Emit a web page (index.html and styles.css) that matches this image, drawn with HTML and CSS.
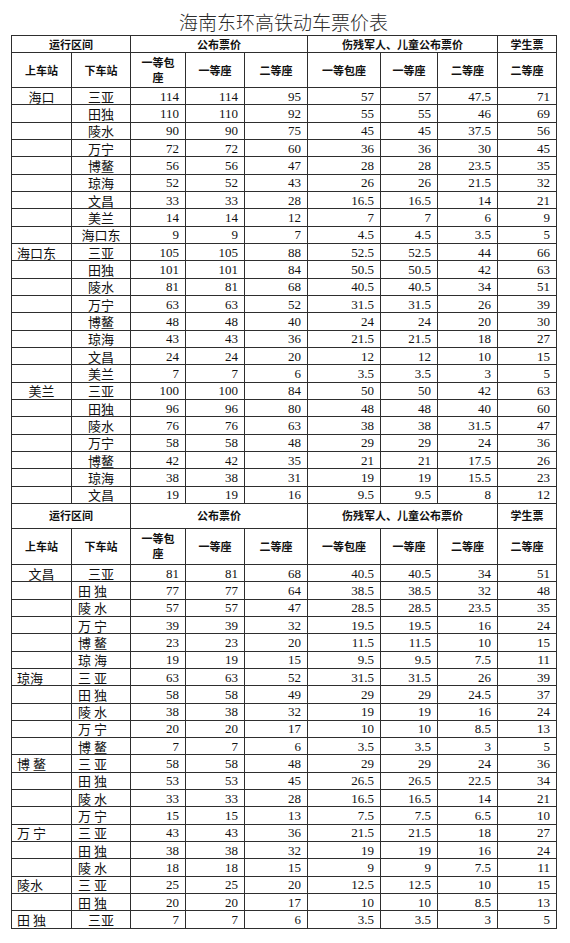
FILE: index.html
```html
<!DOCTYPE html>
<html lang="zh-CN">
<head>
<meta charset="utf-8">
<title>海南东环高铁动车票价表</title>
<link rel="stylesheet" href="styles.css">
</head>
<body>
<h1 class="title">海南东环高铁动车票价表</h1>
<table class="fares">
<colgroup>
<col class="c1"><col class="c2"><col class="c3"><col class="c4"><col class="c5"><col class="c6"><col class="c7"><col class="c8"><col class="c9">
</colgroup>
<tbody>
<tr class="h1 first"><th colspan="2">运行区间</th><th colspan="3">公布票价</th><th colspan="3">伤残军人、儿童公布票价</th><th>学生票</th></tr>
<tr class="h2 first"><th>上车站</th><th>下车站</th><th>一等包<br>座</th><th>一等座</th><th>二等座</th><th>一等包座</th><th>一等座</th><th>二等座</th><th>二等座</th></tr>
<tr><td class="st ctr">海口</td><td class="st ctr">三亚</td><td>114</td><td>114</td><td>95</td><td>57</td><td>57</td><td>47.5</td><td>71</td></tr>
<tr><td class="st"></td><td class="st ctr">田独</td><td>110</td><td>110</td><td>92</td><td>55</td><td>55</td><td>46</td><td>69</td></tr>
<tr><td class="st"></td><td class="st ctr">陵水</td><td>90</td><td>90</td><td>75</td><td>45</td><td>45</td><td>37.5</td><td>56</td></tr>
<tr><td class="st"></td><td class="st ctr">万宁</td><td>72</td><td>72</td><td>60</td><td>36</td><td>36</td><td>30</td><td>45</td></tr>
<tr><td class="st"></td><td class="st ctr">博鳌</td><td>56</td><td>56</td><td>47</td><td>28</td><td>28</td><td>23.5</td><td>35</td></tr>
<tr><td class="st"></td><td class="st ctr">琼海</td><td>52</td><td>52</td><td>43</td><td>26</td><td>26</td><td>21.5</td><td>32</td></tr>
<tr><td class="st"></td><td class="st ctr">文昌</td><td>33</td><td>33</td><td>28</td><td>16.5</td><td>16.5</td><td>14</td><td>21</td></tr>
<tr><td class="st"></td><td class="st ctr">美兰</td><td>14</td><td>14</td><td>12</td><td>7</td><td>7</td><td>6</td><td>9</td></tr>
<tr><td class="st"></td><td class="st ctr">海口东</td><td>9</td><td>9</td><td>7</td><td>4.5</td><td>4.5</td><td>3.5</td><td>5</td></tr>
<tr><td class="st lft">海口东</td><td class="st ctr">三亚</td><td>105</td><td>105</td><td>88</td><td>52.5</td><td>52.5</td><td>44</td><td>66</td></tr>
<tr><td class="st"></td><td class="st ctr">田独</td><td>101</td><td>101</td><td>84</td><td>50.5</td><td>50.5</td><td>42</td><td>63</td></tr>
<tr><td class="st"></td><td class="st ctr">陵水</td><td>81</td><td>81</td><td>68</td><td>40.5</td><td>40.5</td><td>34</td><td>51</td></tr>
<tr><td class="st"></td><td class="st ctr">万宁</td><td>63</td><td>63</td><td>52</td><td>31.5</td><td>31.5</td><td>26</td><td>39</td></tr>
<tr><td class="st"></td><td class="st ctr">博鳌</td><td>48</td><td>48</td><td>40</td><td>24</td><td>24</td><td>20</td><td>30</td></tr>
<tr><td class="st"></td><td class="st ctr">琼海</td><td>43</td><td>43</td><td>36</td><td>21.5</td><td>21.5</td><td>18</td><td>27</td></tr>
<tr><td class="st"></td><td class="st ctr">文昌</td><td>24</td><td>24</td><td>20</td><td>12</td><td>12</td><td>10</td><td>15</td></tr>
<tr><td class="st"></td><td class="st ctr">美兰</td><td>7</td><td>7</td><td>6</td><td>3.5</td><td>3.5</td><td>3</td><td>5</td></tr>
<tr><td class="st ctr">美兰</td><td class="st ctr">三亚</td><td>100</td><td>100</td><td>84</td><td>50</td><td>50</td><td>42</td><td>63</td></tr>
<tr><td class="st"></td><td class="st ctr">田独</td><td>96</td><td>96</td><td>80</td><td>48</td><td>48</td><td>40</td><td>60</td></tr>
<tr><td class="st"></td><td class="st ctr">陵水</td><td>76</td><td>76</td><td>63</td><td>38</td><td>38</td><td>31.5</td><td>47</td></tr>
<tr><td class="st"></td><td class="st ctr">万宁</td><td>58</td><td>58</td><td>48</td><td>29</td><td>29</td><td>24</td><td>36</td></tr>
<tr><td class="st"></td><td class="st ctr">博鳌</td><td>42</td><td>42</td><td>35</td><td>21</td><td>21</td><td>17.5</td><td>26</td></tr>
<tr><td class="st"></td><td class="st ctr">琼海</td><td>38</td><td>38</td><td>31</td><td>19</td><td>19</td><td>15.5</td><td>23</td></tr>
<tr><td class="st"></td><td class="st ctr">文昌</td><td>19</td><td>19</td><td>16</td><td>9.5</td><td>9.5</td><td>8</td><td>12</td></tr>
<tr class="h1 second"><th colspan="2">运行区间</th><th colspan="3">公布票价</th><th colspan="3">伤残军人、儿童公布票价</th><th>学生票</th></tr>
<tr class="h2 second"><th>上车站</th><th>下车站</th><th>一等包<br>座</th><th>一等座</th><th>二等座</th><th>一等包座</th><th>一等座</th><th>二等座</th><th>二等座</th></tr>
<tr><td class="st ctr">文昌</td><td class="st ctr">三亚</td><td>81</td><td>81</td><td>68</td><td>40.5</td><td>40.5</td><td>34</td><td>51</td></tr>
<tr><td class="st"></td><td class="st lft2">田 独</td><td>77</td><td>77</td><td>64</td><td>38.5</td><td>38.5</td><td>32</td><td>48</td></tr>
<tr><td class="st"></td><td class="st lft2">陵 水</td><td>57</td><td>57</td><td>47</td><td>28.5</td><td>28.5</td><td>23.5</td><td>35</td></tr>
<tr><td class="st"></td><td class="st lft2">万 宁</td><td>39</td><td>39</td><td>32</td><td>19.5</td><td>19.5</td><td>16</td><td>24</td></tr>
<tr><td class="st"></td><td class="st lft2">博 鳌</td><td>23</td><td>23</td><td>20</td><td>11.5</td><td>11.5</td><td>10</td><td>15</td></tr>
<tr><td class="st"></td><td class="st lft2">琼 海</td><td>19</td><td>19</td><td>15</td><td>9.5</td><td>9.5</td><td>7.5</td><td>11</td></tr>
<tr><td class="st lft">琼海</td><td class="st lft2">三 亚</td><td>63</td><td>63</td><td>52</td><td>31.5</td><td>31.5</td><td>26</td><td>39</td></tr>
<tr><td class="st"></td><td class="st lft2">田 独</td><td>58</td><td>58</td><td>49</td><td>29</td><td>29</td><td>24.5</td><td>37</td></tr>
<tr><td class="st"></td><td class="st lft2">陵 水</td><td>38</td><td>38</td><td>32</td><td>19</td><td>19</td><td>16</td><td>24</td></tr>
<tr><td class="st"></td><td class="st lft2">万 宁</td><td>20</td><td>20</td><td>17</td><td>10</td><td>10</td><td>8.5</td><td>13</td></tr>
<tr><td class="st"></td><td class="st lft2">博 鳌</td><td>7</td><td>7</td><td>6</td><td>3.5</td><td>3.5</td><td>3</td><td>5</td></tr>
<tr><td class="st lft">博 鳌</td><td class="st lft2">三 亚</td><td>58</td><td>58</td><td>48</td><td>29</td><td>29</td><td>24</td><td>36</td></tr>
<tr><td class="st"></td><td class="st lft2">田 独</td><td>53</td><td>53</td><td>45</td><td>26.5</td><td>26.5</td><td>22.5</td><td>34</td></tr>
<tr><td class="st"></td><td class="st lft2">陵 水</td><td>33</td><td>33</td><td>28</td><td>16.5</td><td>16.5</td><td>14</td><td>21</td></tr>
<tr><td class="st"></td><td class="st lft2">万 宁</td><td>15</td><td>15</td><td>13</td><td>7.5</td><td>7.5</td><td>6.5</td><td>10</td></tr>
<tr><td class="st lft">万 宁</td><td class="st lft2">三 亚</td><td>43</td><td>43</td><td>36</td><td>21.5</td><td>21.5</td><td>18</td><td>27</td></tr>
<tr><td class="st"></td><td class="st lft2">田 独</td><td>38</td><td>38</td><td>32</td><td>19</td><td>19</td><td>16</td><td>24</td></tr>
<tr><td class="st"></td><td class="st lft2">陵 水</td><td>18</td><td>18</td><td>15</td><td>9</td><td>9</td><td>7.5</td><td>11</td></tr>
<tr><td class="st lft">陵水</td><td class="st lft2">三 亚</td><td>25</td><td>25</td><td>20</td><td>12.5</td><td>12.5</td><td>10</td><td>15</td></tr>
<tr><td class="st"></td><td class="st lft2">田 独</td><td>20</td><td>20</td><td>17</td><td>10</td><td>10</td><td>8.5</td><td>13</td></tr>
<tr><td class="st lft">田 独</td><td class="st ctr">三亚</td><td>7</td><td>7</td><td>6</td><td>3.5</td><td>3.5</td><td>3</td><td>5</td></tr>
</tbody>
</table>
</body>
</html>
```
FILE: styles.css
```css
html, body {
  margin: 0;
  padding: 0;
  background: #ffffff;
}

.title {
  margin: 0;
  padding-top: 12px;
  height: 23px;
  width: 567px;
  text-align: center;
  font-family: "Noto Sans CJK SC", sans-serif;
  font-weight: 300;
  font-size: 19px;
  line-height: 19px;
  color: #2a2a2a;
  letter-spacing: 0;
}

.fares {
  margin-left: 11px;
  width: 545px;
  table-layout: fixed;
  border-collapse: collapse;
  border: 1px solid #1a1a1a;
  color: #111;
}

.c1 { width: 60px; }
.c2 { width: 59px; }
.c3 { width: 55px; }
.c4 { width: 59px; }
.c5 { width: 63px; }
.c6 { width: 73px; }
.c7 { width: 57px; }
.c8 { width: 60px; }
.c9 { width: 59px; }

.fares th,
.fares td {
  border: 1px solid #2e2e2e;
  padding: 0;
  box-sizing: border-box;
  overflow: hidden;
  white-space: nowrap;
}

.fares th {
  font-family: "Noto Sans CJK SC", sans-serif;
  font-weight: 700;
  font-size: 11px;
  line-height: 15px;
  text-align: center;
  vertical-align: middle;
}

.h1.first th { height: 17px; }
.h2.first th { height: 35px; }
.h1.second th { height: 25px; }
.h2.second th { height: 36px; }

.fares td {
  height: 17.33px;
  font-family: "Liberation Serif", "Times New Roman", serif;
  font-size: 13px;
  line-height: 15px;
  text-align: right;
  padding-right: 6px;
  vertical-align: middle;
}

.fares td.st {
  font-family: "Noto Sans CJK SC", sans-serif;
  font-size: 13px;
  padding-right: 0;
  color: #111;
}

.fares td.ctr { text-align: center; }
.fares td.lft { text-align: left; padding-left: 5px; }
.fares td.lft2 { text-align: left; padding-left: 6px; }
```
